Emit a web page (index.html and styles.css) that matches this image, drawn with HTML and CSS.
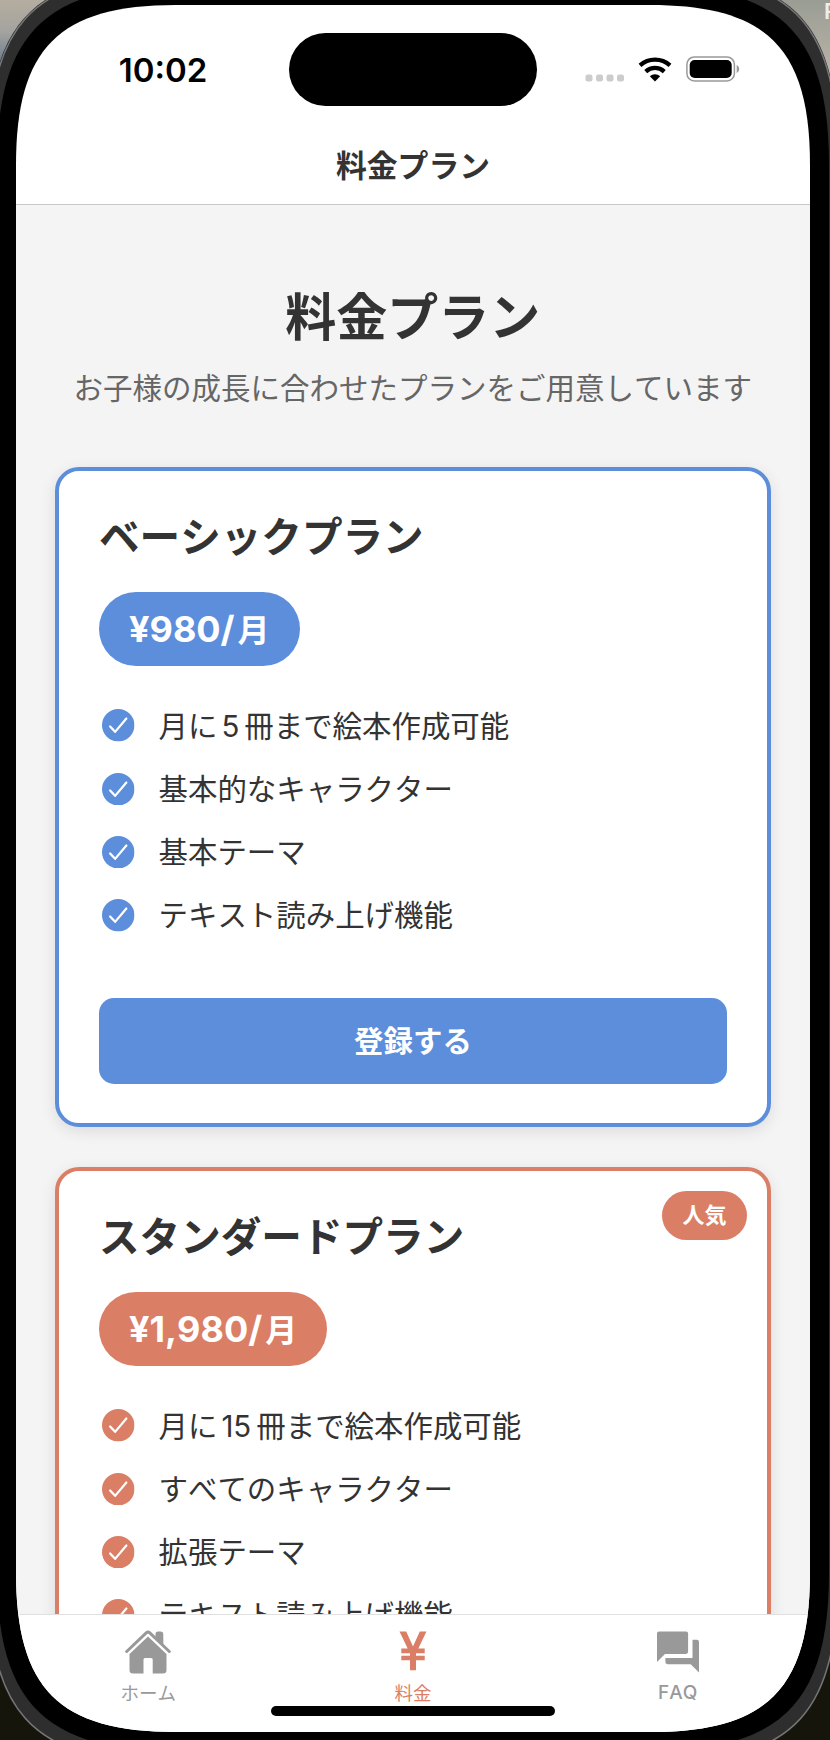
FILE: index.html
```html
<!DOCTYPE html>
<html lang="ja">
<head>
<meta charset="utf-8">
<title>料金プラン</title>
<link rel="stylesheet" href="styles.css">
</head>
<body>
<svg class="icon-defs" width="0" height="0" aria-hidden="true">
  <symbol id="check" viewBox="0 0 32 32">
    <circle cx="16" cy="16" r="16" fill="currentColor"/>
    <path d="M8 17.200l4.900 5.300L24 9.400" fill="none" stroke="#fff" stroke-width="2.200" stroke-linecap="round" stroke-linejoin="round"/>
  </symbol>
</svg>
<div class="desktop">
  <svg class="bezel" width="830" height="1740" viewBox="0 0 830 1740" aria-hidden="true">
    <defs>
      <linearGradient id="sky" x1="0" y1="0" x2="0" y2="1"><stop offset="0" stop-color="#b5ada0"/><stop offset=".5" stop-color="#a3a39f"/><stop offset="1" stop-color="#68788f"/></linearGradient>
      <linearGradient id="haze" x1="0" y1="0" x2="0" y2="1"><stop offset="0" stop-color="#9a9d94"/><stop offset="1" stop-color="#bcb5aa"/></linearGradient>
    </defs>
    <rect width="830" height="1740" fill="#15150b"/>
    <rect width="200" height="65" fill="url(#sky)"/>
    <rect x="630" width="200" height="80" fill="url(#haze)"/>
    <path d="M-13 166C-13 27 27-26 166-26H660C799-26 839 27 839 166V1571C839 1710 799 1763 660 1763H166C27 1763-13 1710-13 1571Z" fill="#222"/>
    <path d="M-12 166C-12 28 28-25 166-25H660C798-25 838 28 838 166V1571C838 1709 798 1762 660 1762H166C28 1762-12 1709-12 1571Z" fill="#2e2e2e" stroke="#777" stroke-width="1.500"/>
    <path d="M-3 165C-3 34 45-14 176-14H650C781-14 829 34 829 165V1572C829 1703 781 1751 650 1751H176C45 1751-3 1703-3 1572Z" fill="#000"/>
  </svg>
  <span class="desktop-label">R</span>

  <main class="screen">
    <div class="status">
      <div class="status-time">10:02</div>
      <div class="island"></div>
      <div class="status-icons">
        <svg width="40" height="8" viewBox="0 0 40 8" fill="#ccc"><rect x=".5" y=".5" width="7" height="7" rx="2.300"/><rect x="11" y=".5" width="7" height="7" rx="2.300"/><rect x="21.500" y=".5" width="7" height="7" rx="2.300"/><rect x="32" y=".5" width="7" height="7" rx="2.300"/></svg>
        <svg class="wifi" width="34" height="25" viewBox="0 0 34 25"><path d="M2 8.300C10.500 .7 23.500 .7 32 8.300M7.700 14.600C13.200 9.700 20.800 9.700 26.300 14.600" fill="none" stroke="#000" stroke-width="4.300"/><path d="M17 24.500L11.800 19.300C14.800 16.600 19.200 16.600 22.200 19.300Z"/></svg>
        <svg class="battery" width="54" height="26" viewBox="0 0 54 26"><rect x=".9" y=".9" width="47.500" height="24" rx="7.500" fill="none" stroke="#999" stroke-width="1.500"/><rect x="3.700" y="4" width="42" height="18" rx="5"/><path d="M50.700 9C54 10.500 54 15.500 50.700 17Z" fill="#999"/></svg>
      </div>
    </div>
    <header class="header">料金プラン</header>

    <div class="content">
      <h1 class="page-title">料金プラン</h1>
      <p class="lead">お子様の成長に合わせたプランをご用意しています</p>

      <section class="card basic">
        <h2 class="card-title">ベーシックプラン</h2>
        <div class="price">¥980/<span class="per">月</span></div>
        <ul class="features">
          <li><svg class="check"><use href="#check"/></svg><span>月に<span class="num">5</span>冊まで絵本作成可能</span></li>
          <li><svg class="check"><use href="#check"/></svg><span>基本的なキャラクター</span></li>
          <li><svg class="check"><use href="#check"/></svg><span>基本テーマ</span></li>
          <li><svg class="check"><use href="#check"/></svg><span>テキスト読み上げ機能</span></li>
        </ul>
        <button class="subscribe" type="button">登録する</button>
      </section>

      <section class="card standard">
        <span class="badge">人気</span>
        <h2 class="card-title">スタンダードプラン</h2>
        <div class="price">¥1,980/<span class="per">月</span></div>
        <ul class="features">
          <li><svg class="check"><use href="#check"/></svg><span>月に<span class="num">15</span>冊まで絵本作成可能</span></li>
          <li><svg class="check"><use href="#check"/></svg><span>すべてのキャラクター</span></li>
          <li><svg class="check"><use href="#check"/></svg><span>拡張テーマ</span></li>
          <li><svg class="check"><use href="#check"/></svg><span>テキスト読み上げ機能</span></li>
        </ul>
      </section>
    </div>

    <nav class="tabs">
      <a class="tab">
        <svg width="46" height="44" viewBox="0 0 46 44" fill="currentColor"><path d="M30.500 8V4Q30.500 1.500 33 1.500H36Q38.300 1.500 38.300 4V16Z"/><path d="M1.700 21.500L21.200 2.900Q23 1.300 24.800 2.900L44.300 21.500" fill="none" stroke="currentColor" stroke-width="3" stroke-linecap="round"/><path d="M23 6.500L41.500 24V40Q41.500 43.500 38 43.500H27.700V29.500Q27.700 28 26.200 28H20Q18.500 28 18.500 29.500V43.500H8Q4.500 43.500 4.500 40V24Z"/></svg>
        <span>ホーム</span>
      </a>
      <a class="tab active">
        <svg width="46" height="44" viewBox="0 0 46 44" fill="currentColor"><path d="M9.500 1.500H16.200L23 16.500L29.800 1.500H36.500L28.300 18.600H34.700V23.200H26V25.700H34.700V30.300H26V40.200H20V30.300H11.300V25.700H20V23.200H11.300V18.600H17.700Z"/></svg>
        <span>料金</span>
      </a>
      <a class="tab">
        <svg width="46" height="44" viewBox="0 0 46 44" fill="currentColor"><path d="M4.100 1.500H31Q33.100 1.500 33.100 3.600V21.800Q33.100 23.900 31 23.900H10L2 31.900V3.600Q2 1.500 4.100 1.500Z"/><path d="M37.500 9.800H41.900Q44 9.800 44 11.900V42.400L35.700 34.200H12.500Q10.400 34.200 10.400 32.100V28H37.500Z"/></svg>
        <span class="latin">FAQ</span>
      </a>
      <div class="home-indicator"></div>
    </nav>
  </main>
</div>
</body>
</html>
```
FILE: styles.css
```css
* { box-sizing: border-box; }

body {
  margin: 0;
  font-family: Inter, "Noto Sans CJK JP", sans-serif;
  font-kerning: none;
  color: #333;
}

.icon-defs { position: absolute; }

.desktop {
  position: relative;
  width: 830px;
  height: 1740px;
  padding: 5px 20px 8px 16px;
  overflow: hidden;
}

.bezel { position: absolute; inset: 0; }

.desktop-label {
  position: absolute;
  left: 824px;
  top: -1px;
  font: 600 22px/24px Inter, sans-serif;
  color: #eee;
}

.screen {
  position: relative;
  display: flex;
  flex-direction: column;
  width: 794px;
  height: 1727px;
  background: #fff;
  clip-path: path("M0 160C0 43 43 0 160 0H634C751 0 794 43 794 160V1567C794 1684 751 1727 634 1727H160C43 1727 0 1684 0 1567Z");
}

.status {
  display: grid;
  grid-template-columns: 273px 248px 273px;
  height: 101px;
  padding-top: 27.500px;
  color: #000;
}

.status-time {
  padding: 17px 0 0 21px;
  font-size: 33px;
  font-weight: 600;
  line-height: 40px;
  text-align: center;
}

.island {
  height: 73px;
  border-radius: 37px;
  background: #000;
}

.status-icons {
  display: flex;
  align-items: flex-end;
  gap: 13.500px;
  height: 49.500px;
  padding-left: 47.500px;
}

.header {
  height: 99px;
  padding-top: 36px;
  border-bottom: 1px solid #c8c8c8;
  font-size: 30.800px;
  font-weight: 700;
  line-height: 48px;
  text-align: center;
}

.content {
  flex: 1;
  min-height: 0;
  overflow: hidden;
  padding: 75px 39.500px 0 39px;
  background: #f4f4f4;
}

.page-title {
  margin: 0;
  font-size: 51px;
  font-weight: 700;
  line-height: 76px;
  text-align: center;
}

.lead {
  margin: 12px 0 0;
  color: #666;
  font-size: 29.500px;
  line-height: 40px;
  text-align: center;
  white-space: nowrap;
}

.card {
  position: relative;
  height: 660px;
  padding: 41px 39.500px 39px 40px;
  border: 4px solid;
  border-radius: 24px;
  background: #fff;
  box-shadow: 0 4px 15px rgba(0, 0, 0, .1);
}

.basic { --accent: #5c8edc; margin-top: 59px; border-color: var(--accent); }
.standard { --accent: #da7e65; margin-top: 40px; border-color: var(--accent); }

.card-title {
  margin: 0;
  font-size: 40.600px;
  font-weight: 700;
  line-height: 52px;
}

.price {
  display: block;
  width: fit-content;
  height: 74.500px;
  margin-top: 27.500px;
  padding: 0 30px;
  border-radius: 37.500px;
  background: var(--accent);
  color: #fff;
  font-size: 36px;
  font-weight: 700;
  line-height: 75px;
}

.per { margin-left: 3px; font-size: 32px; }

.features {
  display: flex;
  flex-direction: column;
  gap: 23.300px;
  margin: 39.500px 0 0;
  padding: 0 0 0 3px;
  list-style: none;
  font-size: 29.450px;
  line-height: 40px;
}

.features li { display: flex; align-items: center; gap: 24px; height: 40px; white-space: nowrap; }
.check { flex: none; width: 32.500px; height: 32.500px; color: var(--accent); }
.num { margin: 0 5px 0 4px; }

.subscribe {
  width: 100%;
  height: 86px;
  margin-top: 62.500px;
  padding: 0;
  border: 0;
  border-radius: 15px;
  background: var(--accent);
  color: #fff;
  font: 700 29.450px/86px Inter, "Noto Sans CJK JP", sans-serif;
}

.badge {
  position: absolute;
  top: 19.500px;
  right: 19.500px;
  width: 85px;
  height: 49px;
  border-radius: 24.500px;
  background: var(--accent);
  color: #fff;
  font-size: 22px;
  font-weight: 700;
  line-height: 49px;
  text-align: center;
}

.tabs {
  position: relative;
  display: grid;
  grid-template-columns: repeat(3, 1fr);
  height: 118px;
  border-top: 1.500px solid #e0e0e0;
  background: #fff;
}

.tab {
  display: flex;
  flex-direction: column;
  align-items: center;
  gap: 7px;
  padding-top: 15px;
  color: #999;
  font-size: 18.500px;
  font-weight: 400;
  line-height: 24px;
}

.tab .latin { font-size: 19px; font-weight: 500; }

.tab.active { color: #da7e65; }

.home-indicator {
  position: absolute;
  left: 255px;
  bottom: 16px;
  width: 284px;
  height: 10px;
  border-radius: 5px;
  background: #000;
}
```
